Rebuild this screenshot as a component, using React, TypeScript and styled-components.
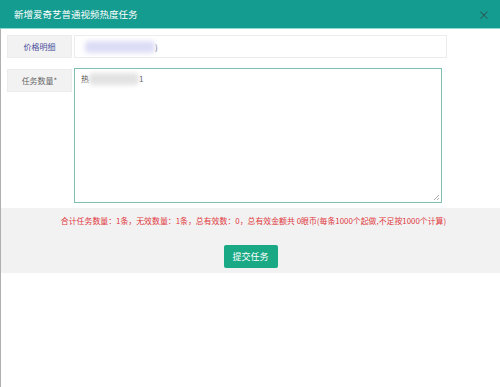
import React from 'react'
import styled, { createGlobalStyle } from 'styled-components'

const GlobalStyle = createGlobalStyle`
  html, body {
    margin: 0;
    padding: 0;
    background: #fff;
  }
  body {
    font-family: "Microsoft YaHei", "Noto Sans CJK SC", "Liberation Sans", sans-serif;
  }
`

const Modal = styled.div`
  width: 500px;
  height: 387px;
  box-sizing: border-box;
  display: flex;
  flex-direction: column;
  background: #fff;
  overflow: hidden;
`

const Header = styled.div`
  height: 28px;
  flex: none;
  background: #149c90;
  border-bottom: 1px solid #8fd8d2;
  display: flex;
  align-items: center;
  justify-content: space-between;
  padding: 0 10px 0 14px;
  color: #fff;
  font-size: 9.5px;
`

const Close = styled.span`
  color: #2a5854;
  font-size: 12px;
  line-height: 1;
  margin-top: 2px;
`

const Body = styled.div`
  flex: 1;
  display: flex;
  flex-direction: column;
  border-left: 1px solid #b0b0b0;
  padding-top: 6px;
`

const Row = styled.div<{ $gap?: number }>`
  display: flex;
  align-items: flex-start;
  gap: 2px;
  padding-left: 6px;
  margin-bottom: ${p => p.$gap ?? 0}px;
`

const Label = styled.div<{ $accent?: boolean }>`
  width: 65px;
  height: 23px;
  box-sizing: border-box;
  flex: none;
  background: #f2f2f2;
  border: 1px solid #ececec;
  display: flex;
  align-items: center;
  justify-content: center;
  font-size: 8px;
  color: ${p => (p.$accent ? '#4a4f9c' : '#666')};
  margin-top: ${p => (p.$accent ? 0 : 1)}px;
`

const Input = styled.div`
  width: 373px;
  height: 23px;
  box-sizing: border-box;
  border: 1px solid #ececec;
  display: flex;
  align-items: center;
  padding-left: 10px;
  font-size: 8px;
  color: #555;
`

const Blur = styled.span<{ $w: number; $c: string }>`
  display: inline-block;
  width: ${p => p.$w}px;
  height: 12px;
  background: ${p => p.$c};
  filter: blur(2.5px);
  border-radius: 4px;
`

const TextBox = styled.div`
  position: relative;
  width: 368px;
  height: 135px;
  box-sizing: border-box;
  border: 1px solid #7fbfb2;
  padding: 4px 6px;
  font-size: 8px;
  color: #555;
  display: flex;
  align-items: flex-start;
`

const Grip = styled.svg`
  position: absolute;
  right: 1px;
  bottom: 1px;
`

const Summary = styled.div`
  margin-top: 5px;
  height: 65px;
  background: #f2f2f2;
  display: flex;
  flex-direction: column;
  align-items: center;
  padding-top: 7px;
  box-sizing: border-box;
`

const Note = styled.div`
  font-size: 7.9px;
  color: #e0393e;
  margin-left: 6px;
  white-space: nowrap;
`

const Submit = styled.button`
  margin-top: 19px;
  width: 54px;
  height: 23px;
  border: none;
  border-radius: 2px;
  background: #1aa985;
  color: #fff;
  font-family: inherit;
  font-size: 9px;
  padding: 0;
`

export default function App() {
  return (
    <>
      <GlobalStyle />
      <Modal>
        <Header>
          <span>新增爱奇艺普通视频热度任务</span>
          <Close>×</Close>
        </Header>
        <Body>
          <Row $gap={10}>
            <Label $accent>价格明细</Label>
            <Input>
              <Blur $w={70} $c="#dcdcf6" />
              <span>)</span>
            </Input>
          </Row>
          <Row>
            <Label>任务数量*</Label>
            <TextBox>
              <span>热</span>
              <Blur $w={50} $c="#e2e2e2" />
              <span>1</span>
              <Grip width="7" height="7" viewBox="0 0 7 7">
                <path d="M6 1 L1 6 M6 4 L4 6" stroke="#999" strokeWidth="0.8" />
              </Grip>
            </TextBox>
          </Row>
          <Summary>
            <Note>
              合计任务数量：1条，无效数量：1条，总有效数：0，总有效金额共 0眼币(每条1000个起做,不足按1000个计算)
            </Note>
            <Submit>提交任务</Submit>
          </Summary>
        </Body>
      </Modal>
    </>
  )
}
